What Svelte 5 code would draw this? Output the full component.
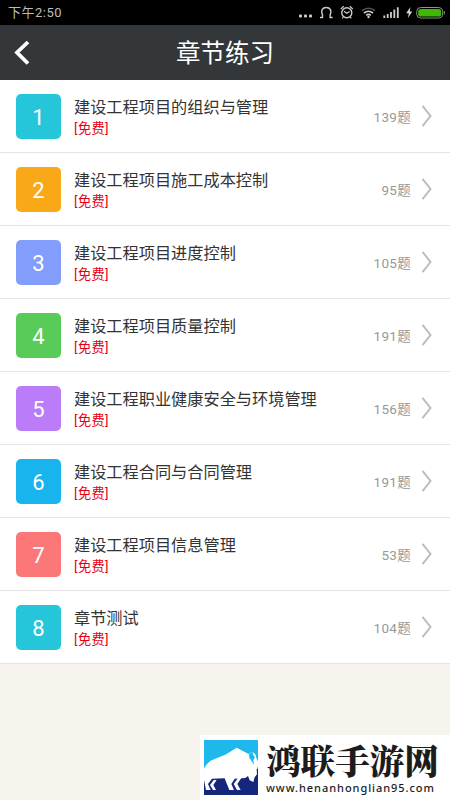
<script lang="ts">
  interface Chapter {
    title: string
    count: number
    color: string
  }

  const chapters: Chapter[] = [
    { title: '建设工程项目的组织与管理', count: 139, color: '#26c6da' },
    { title: '建设工程项目施工成本控制', count: 95, color: '#f9a818' },
    { title: '建设工程项目进度控制', count: 105, color: '#839dfd' },
    { title: '建设工程项目质量控制', count: 191, color: '#59cb59' },
    { title: '建设工程职业健康安全与环境管理', count: 156, color: '#bb7cfa' },
    { title: '建设工程合同与合同管理', count: 191, color: '#18b4ed' },
    { title: '建设工程项目信息管理', count: 53, color: '#fc7777' },
    { title: '章节测试', count: 104, color: '#26c6da' },
  ]
</script>

<div class="screen">
  <div class="status">
    <span class="time">下午2:50</span>
    <svg width="160" height="25" viewBox="0 0 160 25" fill="none" stroke="#ccc">
      <!-- more -->
      <g fill="#ccc" stroke="none">
        <rect x="8" y="14.5" width="3" height="3" rx="1" />
        <rect x="13" y="14.5" width="3" height="3" rx="1" />
        <rect x="18" y="14.5" width="3" height="3" rx="1" />
      </g>
      <!-- headset -->
      <path d="M29 17.5h2.5V15c-2-5 .2-7.500 3.800-7.500s5.800 2.500 3.800 7.500v2.500h2.500" stroke-width="1.4" />
      <!-- alarm -->
      <circle cx="55.8" cy="12.8" r="5" stroke-width="1.4" />
      <path d="M49.800 9l3-2.700M61.800 9l-3-2.700M53 11.300l2.800 2 2.800-1.800M52.300 17l-1 1.300M59.300 17l1 1.300" stroke-width="1.2" />
      <!-- wifi -->
      <path d="M71 10.700q6.500-5 13 0" stroke="#555" stroke-width="1.5" />
      <path d="M73 13q4.500-3.500 9 0M75.200 15.300q2.300-1.800 4.600 0" stroke-width="1.6" />
      <circle cx="77.5" cy="17" r="1.2" fill="#ccc" stroke="none" />
      <!-- signal -->
      <path d="M93.300 18v-2.500M96.700 18v-4M100 18v-6M103.300 18v-8.500M106.800 18V7.200" stroke-width="1.8" />
      <!-- charging -->
      <path d="M119.500 7l-4.300 6.300h2.700l-1 4.700 4.400-6.500h-2.700z" fill="#ddd" stroke="none" />
      <rect x="125.7" y="7.5" width="26" height="10.5" rx="4" stroke="#8b9488" />
      <rect x="127.2" y="9" width="23" height="7.5" rx="2.6" fill="#42b806" stroke="none" />
      <path d="M153.300 11v3.500" stroke="#8b9488" />
    </svg>
  </div>

  <header>
    <button class="back" aria-label="返回">
      <svg width="20" height="28" viewBox="0 0 20 28">
        <path d="M17 3L6 13.500l11 11" fill="none" stroke="#fff" stroke-width="3.8" />
      </svg>
    </button>
    <h1>章节练习</h1>
  </header>

  <ul>
    {#each chapters as chapter, i}
      <li>
        <span class="badge" style:background={chapter.color}>{i + 1}</span>
        <div class="info">
          <div class="title">{chapter.title}</div>
          <div class="free">[免费]</div>
        </div>
        <span class="count">{chapter.count}题</span>
        <svg class="arrow" width="12" height="24" viewBox="0 0 12 24">
          <path d="M1.500 1.800L9.500 12l-8 10.200" fill="none" stroke="#bdbdbd" stroke-width="2" />
        </svg>
      </li>
    {/each}
  </ul>

  <div class="brand">
    <svg width="54" height="55" viewBox="0 0 162 165">
      <path fill="#20b7ec" d="M0 0h162v86H0z" />
      <path fill="#14277d" d="M0 86h162v79H0z" />
      <!-- bison -->
      <path
        fill="#fff"
        d="M0 86Q12 62 32 57L64 44 98 23 134 42 144 35Q158 42 157 55L162 63V78L158 88 159 103 152 112 148 126 137 121 132 108 124 114 92 116 82 132 90 150H76L66 125 62 115 24 116 12 132 20 150H6L0 120z"
      />
      <path fill="#20b7ec" d="M146 34l-11 9 1 11 7 10 7 10-2-14 5-9-6-7z" />
      <path fill="#fff" d="M38 120H29L18 135l9 15h9l-8-15zM112 114H102L89 132l10 18h11l-10-18z" />
    </svg>
    <div class="brand-text">
      <div class="brand-name">鸿联手游网</div>
      <div class="brand-url">www.henanhonglian95.com</div>
    </div>
  </div>
</div>

<style>
  :global(body) {
    margin: 0;
  }
  .screen {
    position: relative;
    width: 450px;
    height: 800px;
    overflow: hidden;
    background: #f7f4ed;
    font-family: Roboto, 'Noto Sans CJK SC', sans-serif;
  }
  .status {
    display: flex;
    justify-content: space-between;
    height: 25px;
    padding-left: 8px;
    background: #000;
  }
  .status svg {
    margin-right: -1px;
  }
  .time {
    color: #bbb;
    font-size: 13px;
    line-height: 25px;
    letter-spacing: 0.5px;
  }
  header {
    display: grid;
    grid-template-columns: 48px 1fr 48px;
    align-items: center;
    height: 55px;
    background: #33373a;
  }
  .back {
    width: 48px;
    height: 55px;
    padding: 0 0 0 11px;
    border: none;
    background: none;
    text-align: left;
  }
  .back svg {
    display: block;
  }
  h1 {
    margin: 0;
    padding-top: 2px;
    color: #fff;
    font-size: 24.5px;
    font-weight: 400;
    line-height: 53px;
    text-align: center;
  }
  ul {
    margin: 0;
    padding: 0;
    list-style: none;
  }
  li {
    display: flex;
    align-items: center;
    box-sizing: border-box;
    height: 73px;
    padding: 0 17px 0 16px;
    border-bottom: 1px solid #e4e4e4;
    background: #fff;
  }
  .badge {
    width: 45px;
    height: 45px;
    margin-right: 13px;
    border-radius: 5px;
    color: #fff;
    font-size: 22px;
    line-height: 47px;
    text-align: center;
  }
  .info {
    flex: 1;
    padding-top: 3px;
  }
  .title {
    color: #333;
    font-size: 16.2px;
    line-height: 23px;
    white-space: nowrap;
  }
  .free {
    color: #e60012;
    font-size: 13.2px;
    line-height: 20px;
    letter-spacing: 0.4px;
  }
  .count {
    padding-bottom: 1px;
    color: #999;
    font-size: 13.5px;
    letter-spacing: 0.3px;
  }
  .arrow {
    margin-left: 10px;
  }
  /* site banner pinned over the bottom right corner */
  .brand {
    position: absolute;
    right: 0;
    bottom: 0;
    display: flex;
    box-sizing: border-box;
    width: 250px;
    height: 65px;
    padding: 5px 0 0 4px;
    background: #fff;
  }
  .brand-text {
    margin-left: 8px;
    color: #1c1c1c;
    white-space: nowrap;
  }
  .brand-name {
    font-family: 'Noto Serif CJK SC', 'Noto Sans CJK SC', serif;
    font-size: 34.6px;
    font-weight: 900;
    line-height: 38px;
  }
  .brand-url {
    margin-top: 2px;
    font-family: 'Noto Sans', sans-serif;
    font-size: 11px;
    font-weight: 500;
    line-height: 16px;
    letter-spacing: 0.95px;
  }
</style>
